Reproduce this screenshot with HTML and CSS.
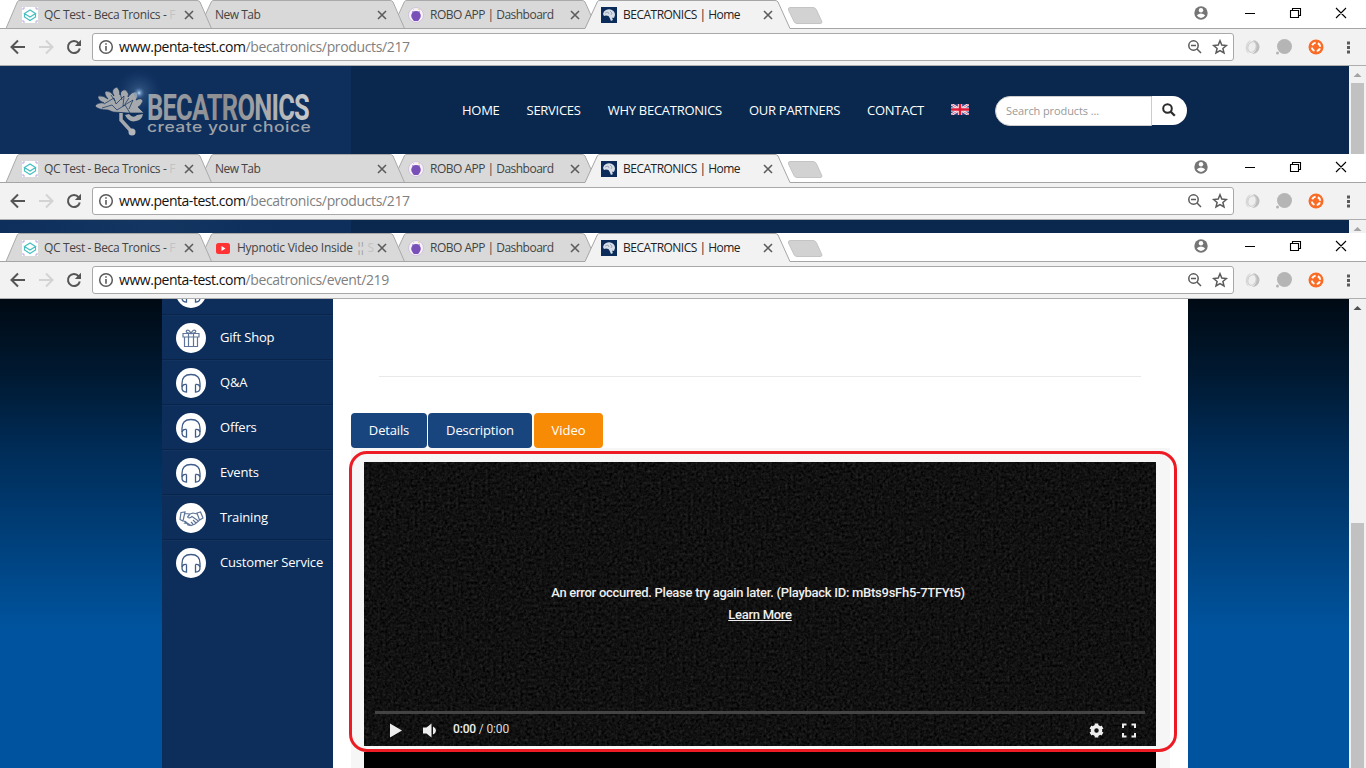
FILE: index.html
```html
<!DOCTYPE html>
<html lang="en">
<head>
<meta charset="utf-8">
<title>BECATRONICS | Home</title>
<link rel="stylesheet" href="styles.css">
</head>
<body>
<svg class="defs" width="0" height="0">
  <symbol id="strip" viewBox="0 0 1366 29">
    <g fill="#d9d9d9" stroke="#a9a9a9">
      <path d="M392 28.5 404.5 1.5Q405 .5 407 .5H582Q584 .5 585 2L597 28.5"/>
      <path d="M199 28.5 211.500 1.500Q212 .5 214 .5H390Q392 .5 393 2L404.500 28.500"/>
      <path d="M6 28.500 17.500 1.500Q18 .5 20 .5H197Q199 .5 200 2L211.500 28.500"/>
    </g>
    <path d="M0 28.500H1366" stroke="#a5a5a5"/>
    <path d="M585 29.500V28.500L597.500 1.500Q598 .5 600 .5H775Q777 .5 778 2L790 28.500V29.500" fill="#f2f2f2"/>
    <path d="M585 28.500 597.500 1.500Q598 .5 600 .5H775Q777 .5 778 2L790 28.500" fill="none" stroke="#a5a5a5"/>
    <path d="M790 7.500H813Q815.500 7.500 816.500 10L822 22Q822 23.500 820 23.500H797Q795 23.500 794 21.500L788.500 10Q788 7.500 790 7.500Z" fill="#d2d2d2" stroke="#c4c4c4"/>
  </symbol>
  <symbol id="x" viewBox="0 0 10 10"><path d="M1 1 9 9M9 1 1 9" stroke="#5c5c5c" stroke-width="1.6"/></symbol>
  <symbol id="qc" viewBox="0 0 16 16"><rect width="16" height="16" fill="#fff"/><path d="M1 3V1H3M13 1H15V3M1 13V15H3M13 15H15V13" fill="none" stroke="#b9a5dc"/><path d="M2.500 6.500 8 3 13.500 6.500 8 10ZM2.500 6.500V10L8 13.500 13.500 10V6.500" fill="none" stroke="#46bfc0" stroke-width="1.200"/></symbol>
  <symbol id="robo" viewBox="0 0 16 16"><circle cx="8" cy="8" r="7.500" fill="#f7f2f7" stroke="#c9b4d8" stroke-width=".7"/><circle cx="8" cy="8.800" r="4.800" fill="#7850b8"/><path d="M5.500 13.500H10.500M4.500 4.500 5.500 5.500M11.500 4.500 10.500 5.500" stroke="#7850b8" stroke-width="1.200"/><path d="M5 3 6 2M10 2 12 3" stroke="#ead38b"/></symbol>
  <symbol id="brain" viewBox="0 0 16 16"><rect width="16" height="16" fill="#0b2c5b"/><path d="M2 7Q2.500 4 5 3Q8 1.500 11 3Q14 4.500 14 8L13 11 11.500 10.500Q11 12 12 13L10 14Q9 11 7.500 9L5 8.500 3 9Z" fill="#d6dde6"/><path d="M4 6 7 5 8 7M9 4 11 6 10 8" fill="none" stroke="#8192ac" stroke-width=".7"/></symbol>
  <symbol id="tube" viewBox="0 0 16 16"><rect x="1" y="3" width="14" height="11" rx="2.500" fill="#f33"/><path d="M6.500 6V11L10.500 8.500Z" fill="#fff"/></symbol>
  <symbol id="winctl" viewBox="0 0 170 28">
    <circle cx="10" cy="13" r="6.700" fill="#757575"/><circle cx="10" cy="10.300" r="2.200" fill="#fff"/><path d="M5.800 15.300Q10 11.800 14.200 15.300Q12.500 18 10 18T5.800 15.300" fill="#fff"/>
    <path d="M54 13.500H64M99.500 10.500H107.500V17.500H99.500ZM101.500 10V8.500H109.500V15.500H108M145 8 155 18M155 8 145 18" fill="none" stroke="#000" stroke-width="1.100"/>
  </symbol>
  <symbol id="navbtn" viewBox="0 0 90 36">
    <g fill="none" stroke-width="2"><path d="M25 18H12.500M18 11.500 11.500 18 18 24.500" stroke="#555"/><path d="M39 18H51.500M46 11.500 52.500 18 46 24.500" stroke="#d3d3d3"/><path d="M78.700 14.300A6 6 0 1 0 79.800 19.500" stroke="#555"/></g><path d="M81 10.800V17H74.800Z" fill="#555"/>
  </symbol>
  <symbol id="info" viewBox="0 0 16 16"><circle cx="8" cy="8" r="6.300" fill="none" stroke="#5a5a5a" stroke-width="1.500"/><path d="M8 4.200V5.800M8 7V11.700" stroke="#5a5a5a" stroke-width="1.600"/></symbol>
  <symbol id="zoomstar" viewBox="0 0 44 20"><g fill="none" stroke="#5a5a5a" stroke-width="1.500"><circle cx="7.500" cy="8.500" r="4.700"/><path d="M11 12 15 16M5 8.500H10"/><path d="M34 3.800 35.800 8.100 40.300 8.500 36.900 11.500 38 16 34 13.600 30 16 31.100 11.500 27.700 8.500 32.200 8.100Z"/></g></symbol>
  <symbol id="ext" viewBox="0 0 132 36">
    <path d="M17 11A8 8 0 0 0 15 25Q11 18 17 11" fill="#d8d8d8"/><path d="M19 11A7 7 0 0 1 18 25Q26 20 19 11" fill="#bdbdbd"/><ellipse cx="18" cy="18" rx="4" ry="5.500" fill="#eee" stroke="#ccc" transform="rotate(20 18 18)"/>
    <circle cx="50.500" cy="17.500" r="7.500" fill="#b5b5b5"/><circle cx="43.500" cy="24" r="1.500" fill="#b5b5b5"/>
    <circle cx="82" cy="18" r="7.500" fill="#fa6b26"/><circle cx="82" cy="18" r="4.200" fill="none" stroke="#fff" stroke-width="2" stroke-dasharray="4.200 2.400" transform="rotate(20 82 18)"/>
    <path d="M113 12.500H116V15.500H113ZM113 17H116V20H113ZM113 21.500H116V24.500H113Z" fill="#5a5a5a"/>
  </symbol>
  <symbol id="phones" viewBox="0 0 30 30"><circle cx="15" cy="15" r="15" fill="#fff"/><g fill="none" stroke="#3f5b88" stroke-width="1.300"><path d="M6 19V15.500Q6 6.500 15 6.500T24 15.500V19"/><path d="M10.500 16.500V24Q6 24 6 20T10.500 16.500M19.500 16.500V24Q24 24 24 20T19.500 16.500"/></g></symbol>
  <symbol id="gift" viewBox="0 0 30 30"><circle cx="15" cy="15" r="15" fill="#fff"/><path d="M7 10.500H23V14H7ZM8.500 14V23.500H21.500V14M12.500 10.500V23.500M17.500 10.500V23.500M15 10.500Q9 10 10.500 7.500Q13 6 15 10.500Q17 6 19.500 7.500Q21 10 15 10.500" fill="none" stroke="#5e7599" stroke-width="1.200"/></symbol>
  <symbol id="hands" viewBox="0 0 30 30"><circle cx="15" cy="15" r="15" fill="#fff"/><path d="M5 9.500 9 9 7 18 4 16.500ZM21 10 24.500 9 27 15 23.500 17ZM9 10.500 14 11 17 10 21 11M14 11 11.500 14Q13 16 16 13.500L22.500 18 19 21 15 22.500 8 18M10 18 8.500 20 11 20.500 12 22 14 22.500M17 17 20 20M15 19 17 21" fill="none" stroke="#5e7599" stroke-width="1.200"/></symbol>
  <symbol id="up" viewBox="0 0 17 17"><path d="M4.500 11 8.500 7 12.500 11Z"/></symbol>
</svg>

<section class="window first">
  <div class="chrome">
    <div class="tabstrip">
      <svg class="shapes"><use href="#strip"/></svg>
      <div class="tabs">
        <div class="tab"><svg class="fav"><use href="#qc"/></svg><span class="title qc">QC Test - Beca Tronics - <i>F</i></span><svg class="close"><use href="#x"/></svg></div>
        <div class="tab"><span class="title">New Tab</span><svg class="close"><use href="#x"/></svg></div>
        <div class="tab"><svg class="fav"><use href="#robo"/></svg><span class="title robo">ROBO APP | Dashboard</span><svg class="close"><use href="#x"/></svg></div>
        <div class="tab active"><svg class="fav"><use href="#brain"/></svg><span class="title home">BECATRONICS | Home</span><svg class="close"><use href="#x"/></svg></div>
      </div>
      <svg class="winctl"><use href="#winctl"/></svg>
    </div>
    <div class="toolbar"><svg class="navbtn"><use href="#navbtn"/></svg><div class="omnibox"><svg class="info"><use href="#info"/></svg><span class="url"><b>www.penta-test.com</b>/becatronics/products/217</span><svg class="zoomstar"><use href="#zoomstar"/></svg></div><svg class="ext"><use href="#ext"/></svg></div>
  </div>
  <div class="page">
    <header class="header">
      <div class="brand">
        <svg width="351" height="88" viewBox="0 0 351 88">
          <defs>
            <radialGradient id="glow"><stop offset="0" stop-color="#fff"/><stop offset=".15" stop-color="#9ec4ec" stop-opacity=".75"/><stop offset="1" stop-color="#2c64a4" stop-opacity="0"/></radialGradient>
            <linearGradient id="metal"><stop offset="0" stop-color="#9ba0a8"/><stop offset=".5" stop-color="#8d8d90"/><stop offset="1" stop-color="#c8cacc"/></linearGradient>
          </defs>
          <circle cx="139" cy="26" r="24" fill="url(#glow)" opacity=".3"/>
          <g fill="#a5a9ad" stroke="#0f2f5c" stroke-width=".7">
            <path d="M108 44Q98 44 95 40Q98 36 104 37Q97 34 98 30Q103 29 108 33Q103 27 106 25Q111 25 114 30Q110 23 117 21Q120 24 120 29Q121 23 126 24Q130 28 128 31Q132 25 137 26Q139 31 136 34Q142 31 143 35Q141 40 138 41L144 47H128L113 46Z"/>
            <path d="M104 38 114 32 116 38 124 30 123 40 133 34 129 43M102 42 112 39 117 44 125 39 130 47M111 29 115 35M120 27 122 34M129 32 125 38" fill="none"/>
          </g>
          <path d="M121 47V54L131 65" fill="none" stroke="#a5a9ad" stroke-width="3.500"/><circle cx="132" cy="66" r="3.500" fill="#b4b7ba"/><path d="M125 49Q129 57 136 55Q142 54 143 48L137 49Q133 53 129 48Z" fill="#a5a9ad"/>
          <circle cx="139" cy="27" r="6" fill="url(#glow)"/>
          <text transform="translate(147 53.500) scale(.75 1.060)" textLength="217" lengthAdjust="spacing" class="logo-name" fill="url(#metal)">BECATRONICS</text>
          <text transform="translate(147 66) scale(1.250 1)" textLength="131" lengthAdjust="spacing" class="logo-tag" fill="#9da2a8">create your choice</text>
        </svg>
      </div>
      <nav class="menu"><a>HOME</a><a>SERVICES</a><a>WHY BECATRONICS</a><a>OUR PARTNERS</a><a>CONTACT</a>
        <svg class="flag" width="18" height="11" viewBox="0 0 18 11"><rect width="18" height="11" fill="#35458c"/><path d="M0 0 18 11M18 0 0 11" stroke="#f3e9ef" stroke-width="2.600"/><path d="M0 0 18 11M18 0 0 11" stroke="#db4c66" stroke-width=".8"/><path d="M9 0V11M0 5.500H18" stroke="#fff" stroke-width="4.200"/><path d="M9 0V11M0 5.500H18" stroke="#e01636" stroke-width="2.600"/></svg>
      </nav>
      <div class="search"><span class="field">Search products ...</span><span class="go"><svg width="14" height="14" viewBox="0 0 14 14"><circle cx="5.500" cy="5.500" r="4.300" fill="none" stroke="#2b2b2b" stroke-width="2"/><path d="M8.700 8.700 12.800 12.800" stroke="#2b2b2b" stroke-width="2.300"/></svg></span></div>
    </header>
    <div class="scroll"><svg class="arrow"><use href="#up"/></svg><div class="thumb"></div></div>
  </div>
</section>

<section class="window second">
  <div class="chrome">
    <div class="tabstrip">
      <svg class="shapes"><use href="#strip"/></svg>
      <div class="tabs">
        <div class="tab"><svg class="fav"><use href="#qc"/></svg><span class="title qc">QC Test - Beca Tronics - <i>F</i></span><svg class="close"><use href="#x"/></svg></div>
        <div class="tab"><span class="title">New Tab</span><svg class="close"><use href="#x"/></svg></div>
        <div class="tab"><svg class="fav"><use href="#robo"/></svg><span class="title robo">ROBO APP | Dashboard</span><svg class="close"><use href="#x"/></svg></div>
        <div class="tab active"><svg class="fav"><use href="#brain"/></svg><span class="title home">BECATRONICS | Home</span><svg class="close"><use href="#x"/></svg></div>
      </div>
      <svg class="winctl"><use href="#winctl"/></svg>
    </div>
    <div class="toolbar"><svg class="navbtn"><use href="#navbtn"/></svg><div class="omnibox"><svg class="info"><use href="#info"/></svg><span class="url"><b>www.penta-test.com</b>/becatronics/products/217</span><svg class="zoomstar"><use href="#zoomstar"/></svg></div><svg class="ext"><use href="#ext"/></svg></div>
  </div>
  <div class="page">
    <header class="header"><div class="brand"></div></header>
    <div class="scroll"><svg class="arrow"><use href="#up"/></svg></div>
  </div>
</section>

<section class="window third">
  <div class="chrome">
    <div class="tabstrip">
      <svg class="shapes"><use href="#strip"/></svg>
      <div class="tabs">
        <div class="tab"><svg class="fav"><use href="#qc"/></svg><span class="title qc">QC Test - Beca Tronics - <i>F</i></span><svg class="close"><use href="#x"/></svg></div>
        <div class="tab"><svg class="fav"><use href="#tube"/></svg><span class="title hyp">Hypnotic Video Inside <em>¦¦</em> <i>S</i></span><svg class="close"><use href="#x"/></svg></div>
        <div class="tab"><svg class="fav"><use href="#robo"/></svg><span class="title robo">ROBO APP | Dashboard</span><svg class="close"><use href="#x"/></svg></div>
        <div class="tab active"><svg class="fav"><use href="#brain"/></svg><span class="title home">BECATRONICS | Home</span><svg class="close"><use href="#x"/></svg></div>
      </div>
      <svg class="winctl"><use href="#winctl"/></svg>
    </div>
    <div class="toolbar"><svg class="navbtn"><use href="#navbtn"/></svg><div class="omnibox"><svg class="info"><use href="#info"/></svg><span class="url"><b>www.penta-test.com</b>/becatronics/event/219</span><svg class="zoomstar"><use href="#zoomstar"/></svg></div><svg class="ext"><use href="#ext"/></svg></div>
  </div>
  <div class="page">
    <div class="backdrop">
      <aside class="sidebar">
        <div class="item"><svg><use href="#phones"/></svg></div>
        <div class="item"><svg><use href="#gift"/></svg><span>Gift Shop</span></div>
        <div class="item"><svg><use href="#phones"/></svg><span>Q&amp;A</span></div>
        <div class="item"><svg><use href="#phones"/></svg><span>Offers</span></div>
        <div class="item"><svg><use href="#phones"/></svg><span>Events</span></div>
        <div class="item"><svg><use href="#hands"/></svg><span>Training</span></div>
        <div class="item last"><svg><use href="#phones"/></svg><span>Customer Service</span></div>
      </aside>
      <main class="content">
        <div class="rule"></div>
        <div class="pills"><a class="details">Details</a><a class="description">Description</a><a class="video-pill">Video</a></div>
        <div class="panel">
          <div class="player">
            <svg class="noise" width="792" height="284"><filter id="grain" x="0" y="0" width="100%" height="100%" color-interpolation-filters="sRGB"><feTurbulence type="fractalNoise" baseFrequency=".37 .35" numOctaves="3" seed="11"/><feColorMatrix values=".15 .12 0 0 -.068 .15 .12 0 0 -.068 .15 .12 0 0 -.068 0 0 0 0 1"/></filter><rect width="792" height="284" filter="url(#grain)"/></svg>
            <div class="overlay">
              <div class="error"><p>An error occurred. Please try again later. (Playback ID: mBts9sFh5-7TFYt5)</p><p class="more"><u>Learn More</u></p></div>
              <div class="progress"></div>
              <div class="controls">
                <svg width="54" height="20" viewBox="0 0 54 20" fill="#eee"><path d="M4 3.500V17.500L16 10.500ZM37 7.500H40.500L45.500 3.500V17.500L40.500 13.500H37ZM47 6.500Q50 8 50 10.500T47 14.500Z"/></svg>
                <span class="time">0:00 <i>/ 0:00</i></span>
                <svg class="right" width="60" height="20" viewBox="0 0 60 20"><circle cx="13.500" cy="10.500" r="4" fill="none" stroke="#eee" stroke-width="3.500"/><path d="M13.500 3.500V6M13.500 15V17.500M7.500 7 9.500 8.200M17.500 12.800 19.500 14M7.500 14 9.500 12.800M17.500 8.200 19.500 7" stroke="#eee" stroke-width="3.600"/><path d="M40 8V4.500H43.500M48.500 4.500H52V8M40 13V16.500H43.500M48.500 16.500H52V13" fill="none" stroke="#eee" stroke-width="2"/></svg>
              </div>
            </div>
          </div>
          <div class="below"></div>
        </div>
        <div class="highlight"></div>
      </main>
    </div>
    <div class="scroll long"><svg class="arrow"><use href="#up"/></svg><div class="thumb"></div></div>
  </div>
</section>
</body>
</html>
```
FILE: styles.css
```css
* { box-sizing: border-box; }
body { margin: 0; width: 1366px; height: 768px; overflow: hidden; font-family: "Open Sans", sans-serif; background: #fff; }
svg { display: block; flex: none; }
i, em { font-style: normal; }
.defs { position: absolute; }
.window { display: flex; flex-direction: column; overflow: hidden; }
.first { height: 154px; }
.second { height: 79px; }
.third { height: 535px; }

.chrome { flex: none; height: 66px; background: #fff; }
.tabstrip { height: 29px; display: grid; grid-template-columns: 1191px 175px; }
.shapes { grid-area: 1 / 1 / 2 / 3; width: 1366px; height: 29px; }
.tabs { grid-area: 1 / 1; display: flex; padding-left: 22px; z-index: 1; }
.tab { width: 193px; display: flex; align-items: center; padding-right: 21px; height: 29px; font: 12px "Open Sans", sans-serif; color: #444; }
.active { color: #222; }
.fav { width: 16px; height: 16px; margin-right: 6px; margin-top: 1px; }
.title { white-space: nowrap; flex: 1; width: 0; letter-spacing: -.5px; }
.qc { letter-spacing: -.36px; }
.robo, .home { letter-spacing: -.51px; }
.hyp { letter-spacing: -.25px; }
.title i { color: #c3c3c3; }
.title em { color: #9a9a9a; letter-spacing: -3.2px; padding-right: 2px; }
.close { width: 10px; height: 10px; margin-top: 1px; }
.winctl { grid-area: 1 / 2; width: 170px; height: 28px; z-index: 1; }
.toolbar { height: 37px; background: #f2f2f2; border-bottom: 1px solid #aeaeae; display: flex; }
.navbtn { width: 90px; height: 36px; }
.omnibox { margin: 4px 0 0 2px; width: 1142px; height: 28px; background: #fff; border: 1px solid #a9a9a9; border-radius: 3px; display: flex; align-items: center; padding-left: 5px; }
.info { width: 16px; height: 16px; }
.url { flex: 1; padding: 0 0 1px 5px; font: 14px "Open Sans", sans-serif; color: #808080; letter-spacing: -.36px; }
.url b { font-weight: 400; color: #111; letter-spacing: -.46px; }
.zoomstar { width: 44px; height: 20px; margin-right: 3px; }
.ext { width: 132px; height: 36px; }

.page { flex: 1; display: flex; min-height: 0; }
.header { flex: none; width: 1349px; display: flex; background: #0a284d; overflow: hidden; }
.brand { width: 351px; background: #0e2e5b; }
.second .brand { background: linear-gradient(90deg, #0e2e5b, #123661 42%, #0e2e5b 80%); }
.logo-name { font: 700 34px "Roboto", sans-serif; }
.logo-tag { font: 500 14px "Inter", sans-serif; }
.menu { display: flex; align-items: center; gap: 27px; padding-left: 111px; height: 88px; width: 644px; color: #fff; font-size: 13px; white-space: nowrap; letter-spacing: -.27px; }
.flag { margin-top: -2px; }
.search { height: 30px; margin-top: 30px; display: flex; }
.field { width: 157px; height: 30px; background: #fff; border: 1px solid #ccc; border-radius: 15px 0 0 15px; padding-left: 10px; font-size: 11px; line-height: 28px; color: #999; letter-spacing: -.1px; }
.go { width: 35px; height: 29px; background: #fff; border-radius: 0 15px 15px 0; display: flex; padding: 7px 0 0 10px; }
.scroll { width: 17px; background: #f1f1f1; overflow: hidden; }
.arrow { width: 17px; height: 17px; fill: #a3a3a3; }
.thumb { width: 13px; height: 100px; margin-left: 2px; background: #c1c1c1; }
.long .arrow { fill: #505050; }
.long .thumb { margin-top: 207px; height: 260px; }

.backdrop { width: 1349px; padding-left: 162px; display: flex; background: linear-gradient(#000a14, #001a33 17%, #002c57 32%, #00549f 71%); }
.sidebar { width: 171px; background: #0d2e5a; overflow: hidden; }
.item { height: 45px; display: flex; align-items: center; padding: 0 0 2px 14px; border-bottom: 1px solid #0a2449; border-top: 1px solid #11335f; font-size: 13px; letter-spacing: -.18px; color: #fff; }
.item:first-child { margin-top: -29px; }
.last { border-bottom: 0; }
.item svg { width: 30px; height: 30px; margin-right: 14px; margin-top: 2px; }
.item span { white-space: nowrap; }
.content { position: relative; width: 855px; background: #fff; padding-left: 18px; }
.rule { margin: 77px 0 0 28px; width: 762px; height: 1px; background: #e9e9e9; }
.pills { margin-top: 36px; display: flex; height: 35px; font-size: 13px; letter-spacing: -.15px; color: #fff; }
.pills a { background: #19457e; border-radius: 4px; text-align: center; line-height: 34px; margin-right: 1px; }
.details { width: 76px; }
.description { width: 104px; }
.pills .video-pill { width: 69px; margin-left: 1px; background: #f88b06; letter-spacing: 0; }
.panel { width: 819px; height: 320px; background: #f6f6f6; padding: 14px 14px 0 13px; }
.player { display: grid; width: 792px; height: 284px; background: #151515; }
.noise { grid-area: 1 / 1; }
.overlay { grid-area: 1 / 1; z-index: 1; display: flex; flex-direction: column; font-family: Roboto, sans-serif; color: #eee; }
.error { height: 249px; padding-top: 120px; padding-right: 4px; text-align: center; font-size: 13px; font-weight: 500; line-height: 22px; letter-spacing: -.27px; }
.error p { margin: 0; }
.error .more { padding-left: 4px; }
.progress { height: 3px; margin: 0 11px; background: #444; }
.controls { display: flex; align-items: center; height: 32px; padding: 0 13px 0 22px; }
.time { margin: -2px 0 0 13px; font-size: 12px; font-weight: 500; letter-spacing: -.15px; color: #eee; }
.time i { color: #ddd; font-weight: 400; }
.right { margin-left: auto; }
.below { margin-top: 6px; height: 16px; background: #000; }
.highlight { position: absolute; left: 16px; top: 152px; width: 828px; height: 301px; border: 3px solid #ed1c24; border-radius: 18px; }
```
